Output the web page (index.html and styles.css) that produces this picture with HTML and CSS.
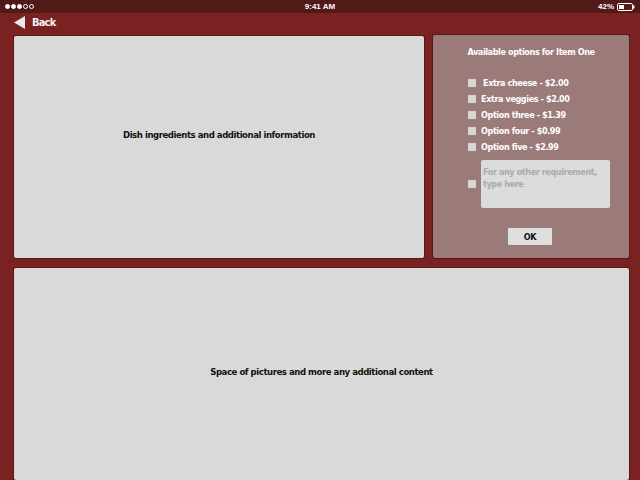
FILE: index.html
```html
<!DOCTYPE html>
<html>
<head>
<meta charset="utf-8">
<link rel="stylesheet" href="styles.css">
</head>
<body>
<div class="status">
  <div class="signal"><span class="dot on"></span><span class="dot on"></span><span class="dot on"></span><span class="dot"></span><span class="dot"></span></div>
  <div class="time">9:41 AM</div>
  <div class="battery"><span>42%</span><svg width="18" height="8" viewBox="0 0 18 8"><rect x="0.5" y="0.5" width="15" height="7" rx="1.5" fill="none" stroke="#fff"/><rect x="2" y="2" width="5" height="4" fill="#fff"/><rect x="16" y="2.5" width="1.5" height="3" fill="#fff"/></svg></div>
</div>
<div class="nav">
  <svg class="back-arrow" width="12" height="13" viewBox="0 0 12 13"><polygon points="11,0 11,13 0,6.5" fill="#e8e8e8"/></svg>
  <span class="back-label">Back</span>
</div>
<div class="main">
  <div class="top-row">
    <div class="panel info"><span class="info-text">Dish ingredients and additional information</span></div>
    <div class="options">
      <div class="opt-title">Available options for Item One</div>
      <div class="opt-list">
        <label class="opt"><span class="box"></span><span class="first">Extra cheese - $2.00</span></label>
        <label class="opt"><span class="box"></span>Extra veggies - $2.00</label>
        <label class="opt"><span class="box"></span>Option three - $1.39</label>
        <label class="opt"><span class="box"></span>Option four - $0.99</label>
        <label class="opt"><span class="box"></span>Option five - $2.99</label>
        <div class="opt other"><span class="box"></span><div class="textarea">For any other requirement,<br>type here</div></div>
      </div>
      <div class="ok">OK</div>
    </div>
  </div>
  <div class="panel pictures">Space of pictures and more any additional content</div>
</div>
</body>
</html>
```
FILE: styles.css
```css
* { box-sizing: border-box; }
html, body { margin: 0; padding: 0; }
body {
  width: 640px;
  height: 480px;
  overflow: hidden;
  background: #7a2121;
  font-family: "DejaVu Sans Condensed", "Liberation Sans", sans-serif;
  font-weight: bold;
}
.status {
  height: 13px;
  background: #521919;
  display: flex;
  align-items: center;
  justify-content: space-between;
  padding: 0 5px 0 5px;
  color: #fff;
  font-family: "Liberation Sans", sans-serif;
  font-size: 8px;
  position: relative;
}
.signal { display: flex; gap: 1px; width: 60px; }
.dot { width: 5px; height: 5px; border-radius: 50%; border: 1px solid #fff; }
.dot.on { background: #fff; }
.time { position: absolute; left: 0; right: 0; text-align: center; }
.battery { display: flex; align-items: center; gap: 3px; }
.nav {
  height: 18px;
  display: flex;
  align-items: center;
  padding-left: 14px;
  color: #f2f2f2;
}
.back-arrow { margin-right: 6px; }
.back-label { font-size: 11px; letter-spacing: -0.8px; }
.main {
  padding: 4px 11px 0 14px;
  display: flex;
  flex-direction: column;
  gap: 10px;
}
.top-row { display: flex; gap: 9px; height: 223px; }
.panel {
  background: #d9d9d9;
  border-radius: 2px;
  box-shadow: 0 0 0 1px #5b1616;
  display: flex;
  align-items: center;
  justify-content: center;
  color: #111;
  font-size: 9.5px;
  letter-spacing: -0.45px;
}
.info { width: 410px; margin-top: 1px; padding-bottom: 26px; }
.options {
  flex: 1;
  background: #9b7a7a;
  border-radius: 2px;
  box-shadow: 0 0 0 1px #5b1616;
  color: #fff;
  font-size: 9px;
  letter-spacing: -0.4px;
  padding: 10px 0 0 35px;
  display: flex;
  flex-direction: column;
}
.opt-title { text-align: center; margin-left: -35px; height: 14px; line-height: 14px; }
.opt-list { margin-top: 16px; display: flex; flex-direction: column; }
.opt { display: flex; align-items: center; height: 16px; }
.first { margin-left: 2px; }
.box {
  width: 8px; height: 8px; background: #d6d6d6; border-radius: 1px;
  margin-right: 5px; flex: none;
}
.opt.other { height: 48px; margin-top: 5px; }
.textarea {
  width: 129px; height: 48px; background: #dcdcdc; border-radius: 2px;
  color: #ababab; padding: 6px 2px; line-height: 12px;
}
.ok {
  align-self: flex-start;
  margin: 20px 0 0 40px;
  width: 44px; height: 17px;
  background: #dedede; border-radius: 1px;
  color: #111; font-size: 9px;
  display: flex; align-items: center; justify-content: center;
}
.pictures { height: 212px; padding-bottom: 6px; }
```
